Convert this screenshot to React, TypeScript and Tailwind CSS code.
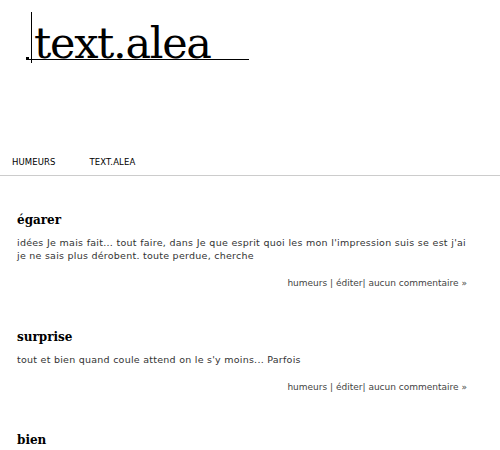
export default function App() {
  const posts = [
    {
      title: "égarer",
      body: "idées Je mais fait... tout faire, dans Je que esprit quoi les mon l'impression suis se est j'ai je ne sais plus dérobent. toute perdue, cherche",
    },
    {
      title: "surprise",
      body: "tout et bien quand coule attend on le s'y moins... Parfois",
    },
    { title: "bien", body: "" },
  ];

  return (
    <div className="h-[450px] w-[500px] overflow-hidden bg-white font-['DejaVu_Sans',sans-serif]">
      <header className="h-[150px] pt-[12px] pl-[26px]">
        <div className="relative inline-flex h-[48px] w-[223px] items-end border-b border-black">
          <span className="absolute left-[5px] top-0 h-[51px] w-px bg-black" />
          <span className="mb-[-1px] h-[3px] w-[3px] bg-black" />
          <span className="ml-[5px] mb-[-1px] font-['DejaVu_Serif',serif] text-[43px] leading-[34px] tracking-[-1.3px] text-black">
            text.alea
          </span>
        </div>
      </header>
      <nav className="flex h-[26px] items-center gap-[34px] border-b border-[#cccccc] pl-[12px] text-[8.5px] tracking-[0.1px] text-black">
        <span>HUMEURS</span>
        <span>TEXT.ALEA</span>
      </nav>
      <main className="px-[17px] pt-[35px]">
        {posts.map((p) => (
          <article key={p.title} className="mb-[37px]">
            <h2 className="font-['DejaVu_Serif',serif] text-[12px] font-bold leading-[18px] text-black">
              {p.title}
            </h2>
            {p.body && (
              <>
                <p className="mt-[7px] pr-[17px] text-justify text-[9.5px] leading-[13px] tracking-[0.25px] text-[#333333]">
                  {p.body}
                </p>
                <p className="mt-[15px] pr-[16px] text-right text-[9px] text-[#444444]">
                  humeurs | éditer| aucun commentaire »
                </p>
              </>
            )}
          </article>
        ))}
      </main>
    </div>
  );
}
